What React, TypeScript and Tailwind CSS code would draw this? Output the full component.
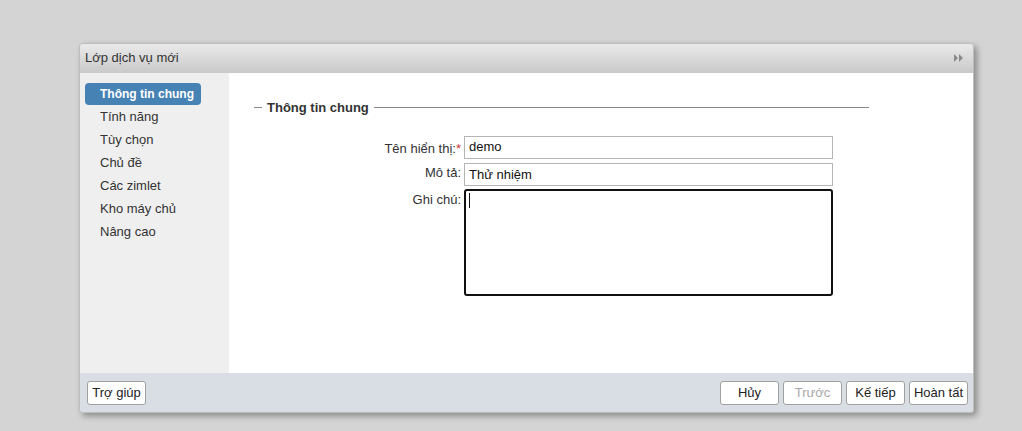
const navItems = ["Thông tin chung", "Tính năng", "Tùy chọn", "Chủ đề", "Các zimlet", "Kho máy chủ", "Nâng cao"];

function Btn({ label, disabled }: { label: string; disabled?: boolean }) {
  return (
    <button
      className={`h-[24px] w-[59px] rounded-[3px] border border-[#a0a0a0] bg-white text-[13px] leading-none ${disabled ? "text-[#a8a8a8]" : "text-[#222]"}`}
    >
      {label}
    </button>
  );
}

export default function App() {
  return (
    <div className="h-[431px] w-[1022px] overflow-hidden bg-[#d4d4d4] pl-[79px] pt-[43px] font-['Liberation_Sans',Arial,sans-serif]">
      {/* dialog */}
      <div className="flex h-[370px] w-[895px] flex-col overflow-hidden rounded-[4px] border border-[#bdbdbd] shadow-[3px_3px_6px_rgba(0,0,0,0.35)]">
        <div className="flex h-[29px] items-center justify-between bg-[linear-gradient(#eaeaea,#c9c9c9)] pb-[1px] pl-[5px] pr-[9px]">
          <span className="text-[13px] text-[#333]">Lớp dịch vụ mới</span>
          <svg width="10" height="8" viewBox="0 0 10 8">
            <path d="M0 0 L4 4 L0 8 Z M5 0 L9 4 L5 8 Z" fill="#8a8a8a" />
          </svg>
        </div>

        <div className="flex flex-1">
          {/* sidebar */}
          <div className="w-[149px] bg-[#efefef] pl-[5px] pt-[10px]">
            {navItems.map((item, i) => (
              <div
                key={item}
                className={`mb-[1px] flex h-[22px] w-[116px] items-center whitespace-nowrap rounded-[4px] pl-[15px] ${i === 0 ? "bg-[#4682b4] text-[12px] font-bold text-white" : "text-[13px] text-[#333]"}`}
              >
                {item}
              </div>
            ))}
          </div>

          {/* content */}
          <div className="flex-1 bg-white pl-[25px] pt-[25px]">
            <div className="flex w-[615px] items-center">
              <div className="h-px w-[8px] bg-[#888]" />
              <span className="px-[5px] text-[13px] font-bold text-[#333]">Thông tin chung</span>
              <div className="h-px flex-1 bg-[#888]" />
            </div>

            <div className="mt-[18px] grid grid-cols-[207px_369px] gap-x-[3px] gap-y-[4px] text-[13px]">
              <div className="pt-[3px] text-right text-[#333]">
                Tên hiển thị:<span className="text-[#c33]">*</span>
              </div>
              <div className="flex h-[23px] items-center border border-[#b5b5b5] pl-[4px] text-[#111]">demo</div>
              <div className="text-right text-[#333]">Mô tả:</div>
              <div className="flex h-[23px] items-center border border-[#b5b5b5] pl-[4px] pt-[2px] text-[#111]">Thử nhiệm</div>
              <div className="text-right text-[#333]">Ghi chú:</div>
              <div className="-mt-[1px] h-[107px] rounded-[3px] border-2 border-[#111] pl-[3px] pt-[2px]">
                <div className="h-[15px] w-px bg-[#111]" />
              </div>
            </div>
          </div>
        </div>

        {/* footer */}
        <div className="flex h-[39px] items-center justify-between bg-[#d9dde4] pl-[7px] pr-[5px]">
          <Btn label="Trợ giúp" />
          <div className="flex gap-[4px]">
            <Btn label="Hủy" />
            <Btn label="Trước" disabled />
            <Btn label="Kế tiếp" />
            <Btn label="Hoàn tất" />
          </div>
        </div>
      </div>
    </div>
  );
}
